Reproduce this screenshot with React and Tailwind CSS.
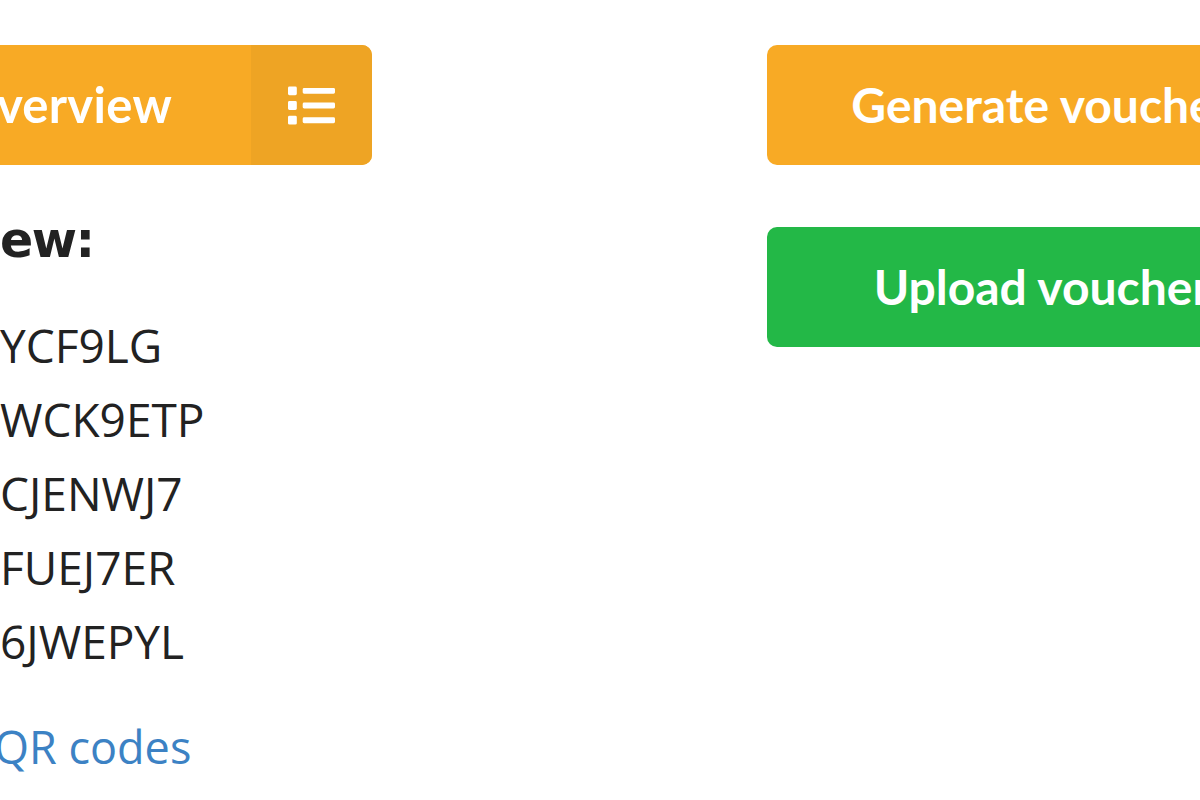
import { FaList } from "react-icons/fa";

const codes = ["YCF9LG", "WCK9ETP", "CJENWJ7", "FUEJ7ER", "6JWEPYL"];

const App = () => {
    return (
        <div className="w-[1200px] h-[800px] overflow-hidden bg-white flex pt-[45px]">
            {/* left column */}
            <div className="w-[372px] shrink-0 flex flex-col">
                <div className="-ml-[300px] w-[672px] h-[120px] rounded-[10px] overflow-hidden flex bg-[#f8aa25] text-white">
                    <div className="flex-1 flex items-center justify-end pr-[79px] whitespace-nowrap font-['Lato',sans-serif] font-bold text-[49px] tracking-[0.3px]">
                        Voucher overview
                    </div>
                    <div className="w-[121px] bg-[#eea424] flex items-center justify-center">
                        <FaList className="w-[47px] h-[47px]" />
                    </div>
                </div>

                <h2 className="mt-[48px] font-['DejaVu_Sans',sans-serif] font-bold text-[49px] leading-[56px] text-[#222] tracking-[-1.5px]">ew:</h2>

                <ul className="mt-[39px] font-['Open_Sans',sans-serif] text-[46px] leading-[74px] text-[#222]">
                    {codes.map(code => (
                        <li key={code} className="whitespace-nowrap">{code}</li>
                    ))}
                </ul>

                <a href="#" className="mt-[39px] -ml-[6px] font-['Open_Sans',sans-serif] text-[45px] leading-[60px] text-[#3c82c4] whitespace-nowrap">QR codes</a>
            </div>

            {/* right column */}
            <div className="ml-[395px] w-[571px] shrink-0 flex flex-col gap-[62px]">
                <button className="h-[120px] rounded-[10px] bg-[#f8aa25] text-white font-['Lato',sans-serif] font-bold text-[48px] whitespace-nowrap flex items-center justify-center">
                    Generate vouchers
                </button>
                <button className="h-[120px] rounded-[10px] bg-[#23b847] text-white font-['Lato',sans-serif] font-bold text-[48px] whitespace-nowrap flex items-center justify-center">
                    Upload vouchers
                </button>
            </div>
        </div>
    );
};

export default App;
